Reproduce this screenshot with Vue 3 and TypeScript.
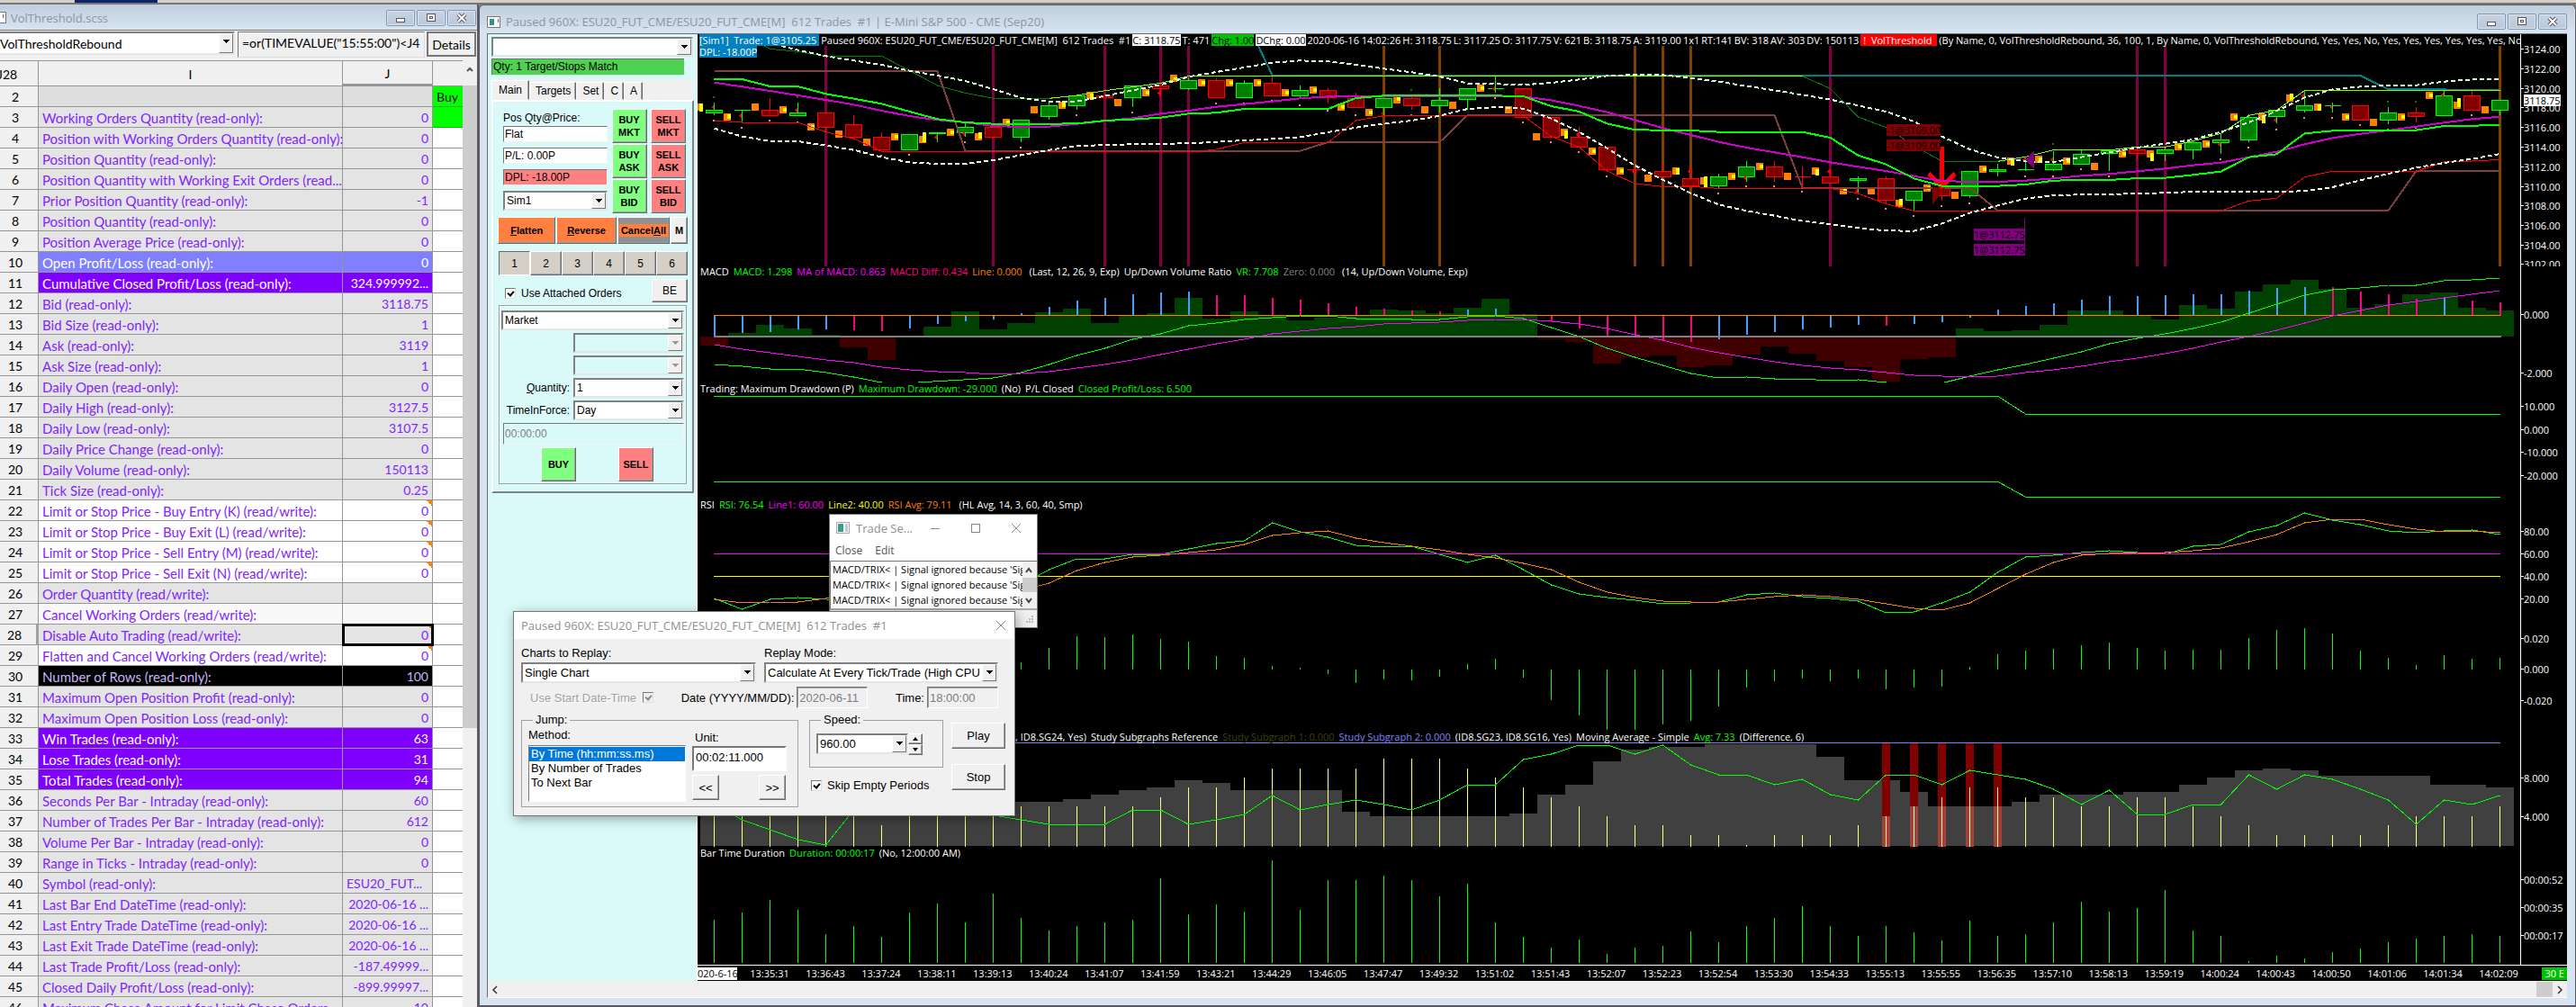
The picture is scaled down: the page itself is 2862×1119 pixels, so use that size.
<script setup lang="ts">
type Cell = { n: number; label: string; value: string; tone?: string; note?: boolean; left?: boolean }

const rows: Cell[] = [
  { n: 2, label: '', value: '', tone: 'head' },
  { n: 3, label: 'Working Orders Quantity (read-only):', value: '0' },
  { n: 4, label: 'Position with Working Orders Quantity (read-only):', value: '0' },
  { n: 5, label: 'Position Quantity (read-only):', value: '0' },
  { n: 6, label: 'Position Quantity with Working Exit Orders (read...', value: '0' },
  { n: 7, label: 'Prior Position Quantity (read-only):', value: '-1' },
  { n: 8, label: 'Position Quantity (read-only):', value: '0' },
  { n: 9, label: 'Position Average Price (read-only):', value: '0' },
  { n: 10, label: 'Open Profit/Loss (read-only):', value: '0', tone: 'blue' },
  { n: 11, label: 'Cumulative Closed Profit/Loss (read-only):', value: '324.999992...', tone: 'violet' },
  { n: 12, label: 'Bid (read-only):', value: '3118.75' },
  { n: 13, label: 'Bid Size (read-only):', value: '1' },
  { n: 14, label: 'Ask (read-only):', value: '3119' },
  { n: 15, label: 'Ask Size (read-only):', value: '1' },
  { n: 16, label: 'Daily Open (read-only):', value: '0' },
  { n: 17, label: 'Daily High (read-only):', value: '3127.5' },
  { n: 18, label: 'Daily Low (read-only):', value: '3107.5' },
  { n: 19, label: 'Daily Price Change (read-only):', value: '0' },
  { n: 20, label: 'Daily Volume (read-only):', value: '150113' },
  { n: 21, label: 'Tick Size (read-only):', value: '0.25' },
  { n: 22, label: 'Limit or Stop Price - Buy Entry (K) (read/write):', value: '0', tone: 'white', note: true },
  { n: 23, label: 'Limit or Stop Price - Buy Exit (L) (read/write):', value: '0', tone: 'white', note: true },
  { n: 24, label: 'Limit or Stop Price - Sell Entry (M) (read/write):', value: '0', tone: 'white', note: true },
  { n: 25, label: 'Limit or Stop Price - Sell Exit (N) (read/write):', value: '0', tone: 'white', note: true },
  { n: 26, label: 'Order Quantity (read/write):', value: '' },
  { n: 27, label: 'Cancel Working Orders (read/write):', value: '', tone: 'pale' },
  { n: 28, label: 'Disable Auto Trading (read/write):', value: '0', note: true },
  { n: 29, label: 'Flatten and Cancel Working Orders (read/write):', value: '0', tone: 'white', note: true },
  { n: 30, label: 'Number of Rows (read-only):', value: '100', tone: 'black' },
  { n: 31, label: 'Maximum Open Position Profit (read-only):', value: '0' },
  { n: 32, label: 'Maximum Open Position Loss (read-only):', value: '0' },
  { n: 33, label: 'Win Trades (read-only):', value: '63', tone: 'violet' },
  { n: 34, label: 'Lose Trades (read-only):', value: '31', tone: 'violet' },
  { n: 35, label: 'Total Trades (read-only):', value: '94', tone: 'violet' },
  { n: 36, label: 'Seconds Per Bar - Intraday (read-only):', value: '60' },
  { n: 37, label: 'Number of Trades Per Bar - Intraday (read-only):', value: '612' },
  { n: 38, label: 'Volume Per Bar - Intraday (read-only):', value: '0' },
  { n: 39, label: 'Range in Ticks - Intraday (read-only):', value: '0' },
  { n: 40, label: 'Symbol (read-only):', value: 'ESU20_FUT...', left: true },
  { n: 41, label: 'Last Bar End DateTime (read-only):', value: '2020-06-16 ...' },
  { n: 42, label: 'Last Entry Trade DateTime (read-only):', value: '2020-06-16 ...' },
  { n: 43, label: 'Last Exit Trade DateTime (read-only):', value: '2020-06-16 ...' },
  { n: 44, label: 'Last Trade Profit/Loss (read-only):', value: '-187.49999...' },
  { n: 45, label: 'Closed Daily Profit/Loss (read-only):', value: '-899.99997...' },
  { n: 46, label: 'Maximum Chase Amount for Limit Chase Orders...', value: '10' },
]

const STEP = 31
const X0 = 793.5
const X = (k: number) => X0 + STEP * k

/* "bar,y bar,y ..." to an SVG point list; unit divides the y values */
const line = (s: string, unit = 1) =>
  s.split(' ').map((p) => {
    const [k, y] = p.split(',').map(Number)
    return `${X(k)},${y / unit}`
  }).join(' ')
const list = (s: string) => s.trim().split(/\s+/).map(Number)

/* candles: body top, body bottom, high, low, pink dot (0 = none), colour; thirds of a pixel */
const candleText = `367 377 343 384 402 g|366 368 367 407 426 g|367 386 328 386 402 r|376 386 343 386 408 g|376 425 376 440 0 r|415 458 385 465 0 r|457 500 442 500 520 r|448 500 448 500 516 g|442 448 442 473 0 g|424 443 410 455 474 g|424 458 418 462 0 r|400 458 400 473 492 g|352 391 343 398 0 g|319 353 319 365 384 g|319 328 308 328 0 r|286 328 286 357 375 g|286 296 275 325 0 r|268 296 258 300 0 g|268 328 262 328 345 r|277 328 268 328 345 g|277 320 255 320 335 r|301 320 285 325 351 g|301 328 295 345 370 r|328 359 310 359 384 r|328 359 328 385 0 g|328 353 320 365 384 r|334 353 295 375 0 g|295 334 295 365 0 g|295 297 255 308 326 g|295 392 295 392 408 r|391 458 391 458 474 r|457 491 424 491 507 r|490 566 490 566 588 r|565 567 550 590 0 r|571 590 546 600 0 r|595 622 557 622 0 r|589 622 580 628 645 g|556 590 538 605 621 g|556 590 538 605 621 r|589 591 556 620 639 r|589 613 565 613 0 r|595 604 588 645 663 g|595 670 588 678 696 r|637 670 637 702 720 g|628 653 620 670 687 r|571 653 571 660 678 g|565 572 545 588 0 g|565 567 527 570 588 g|547 566 505 570 588 g|514 548 502 548 564 g|500 514 500 570 588 g|498 514 490 535 0 r|499 514 490 537 0 g|475 500 468 532 0 g|466 476 445 512 531 g|391 467 380 474 492 g|367 391 367 412 432 g|352 368 303 375 393 g|351 353 343 375 393 g|352 401 352 401 417 r|376 401 357 414 432 g|376 391 357 408 426 r|319 386 302 388 408 g|319 368 303 368 384 r|334 368 334 384 0 g`
const candles = candleText.split('|').map((c, k) => {
  const p = c.split(' ')
  const [t, b, h, l, d] = p.slice(0, 5).map((v) => Math.round(Number(v) / 3))
  return { k, t, b, h, l, d, up: p[5] === 'g' }
})

/* markers between bars: top of the orange square, then the yellow part (0 = none) */
const marks = `346:346-372 378:380-396 345 354:360-373 411:417-430 435 462 444:450-462 453:441-475 429:434-446 444:441-462 396:402-412 354 339:337-357 306:311-332 330 297:304-315 249:257-267 264:269-281 264:269-281 264:269-281 297:303-315 288:294-306 345:351-363 363:369-381 321:325-338 354 339 282:288-300 354 444 429:435-462 492:498-510 558:564-576 582 558:562-584 591:588-627 576:582-594 543:549-561 576 558:564-586 624:630-642 624 666:663-683 615:621-633 639 552:558-570 525:530-552 519:525-537 525:531-543 543 501:507-519 501:510-537 477:483-495 468:474-486 378:385-397 378:385-413 315:312-333 345:348-370 378:385-397 396 378:384-396 306:312-324 339:327-358 354`
  .split(' ').map((m, i) => {
    const [top, y] = m.split(':')
    const [a, b] = y ? y.split('-').map(Number) : [0, 0]
    return { x: Math.round(X(i - 1) + 10), y: Math.round(Number(top) / 3), a: Math.round(a / 3), h: Math.round((b - a) / 3) }
  })
const arrows: [number, number][] = [[0, 357], [1, 386], [3, 367], [8, 457], [9, 446], [16, 310], [24, 378], [28, 296], [31, 448], [33, 572], [35, 572], [37, 592], [40, 572], [41, 638], [47, 532], [48, 532], [54, 481], [56, 400], [57, 320], [58, 357], [62, 316]]
const greenDots: [number, number][] = [[0, 324], [3, 324], [25, 300], [48, 480], [60, 339], [61, 339]]
const sessions: [number, string][] = [[4, 'm'], [10, 'm'], [14, 'm'], [16, 'm'], [17, 'm'], [24, 'o'], [26, 'o'], [33, 'o'], [34, 'o'], [35, 'o'], [40, 'm'], [51, 'm'], [52, 'm'], [64, 'o']]

const price = {
  dark1: line('1.8,153 2,163 3,172 4,187 6,187 7,235 8,285 9,310 10,328 12,328', 3),
  lime1: line('12,328 13,318 14,302 15,290 16,277 17,254 39,254', 3),
  dark2: line('39,254 40,295 41,390 42,425 43,485 44,538 46,538', 3),
  lime2: line('46,538 47,523 48,500 50,500 51,490 52,490 53,470 54,445 55,385 56,367 57,302 64,302', 3),
  brown: line('0,237 8,237 9,503 21,503 22,474 26,474 27,384 38,384 39,626 45,626 46,702 60,702 61,570 64,570', 3),
  teal: line('19.5,153 20,251 59,252 60,298 64,299', 3),
  red: line('0,402 1,408 3,408 4,440 5,462 6,505 17.3,505 18,498 19,475 22,475 23,402 24,386 29,386 30,455 31,490 32,570 33,612 34,622 35,622 36,628 40,628 41,645 42,680 43,703 54,703 55,670 56,661 57,590 58,571 61,571 62,540 63,537 64,532', 3),
  pink: line('0,275 1,289 2,303 3,318 4,333 5,349 6,369 7,387 8,400 9,408 10,420 11,423 12,422 13,413 14,403 15,394 16,379 17,369 18,356 19,347 20,338 21,328 22,322 28,320 29,322 30,334 31,353 32,374 33,400 34,427 35,450 36,473 37,492 38,508 39,524 40,541 41,556 42,570 43,587 44,603 45,606 46,606 47,602 48,595 49,586 50,580 51,571 52,562 53,551 54,542 55,524 56,506 57,481 58,460 59,446 60,435 61,422 62,409 63,397 64,389', 3),
  green: line('0,263 1,264 2,288 3,288 4,313 5,329 6,346 7,372 8,397 9,408 10,413 12,413 13,412 14,402 15,398 16,392 17,379 18,376 19,363 22,363 23,327 24,319 28,319 29,321 30,354 31,372 32,412 33,433 35,435 36,440 39,440 40,459 41,518 42,548 43,595 44,620 46,620 47,615 48,602 49,600 50,600 51,594 52,593 53,583 54,572 55,524 56,514 57,445 58,436 61,434 62,420 63,419 64,417', 3),
  upper: line('2.4,153 3,167 4,187 5,202 6,216 7,236 8,252 9,270 10,297 11,326 12,339 13,338 14,320 15,301 16,283 17,256 18,240 19,225 20,209 21,202 22,205 23,216 24,229 25,241 26,255 27,278 28,280 29,283 30,276 31,265 32,253 33,249 34,250 35,260 36,272 37,287 38,301 39,316 40,332 41,352 42,372 43,405 44,455 45,498 46,525 47,538 48,540 49,524 50,508 51,492 52,479 53,465 54,440 55,408 56,370 57,325 58,298 59,289 60,285 61,284 62,272 63,265 64,264', 3),
  lower: line('0,428 1,455 2,470 3,471 4,485 5,500 6,524 7,541 8,546 9,546 10,534 11,517 12,500 13,487 14,483 15,481 16,479 17,478 18,473 19,468 20,463 21,457 22,441 23,425 24,413 25,402 26,386 27,363 28,357 29,362 30,395 31,440 32,494 33,552 34,599 35,644 36,682 37,703 38,719 39,737 40,748 41,760 42,769 43,770 44,745 45,710 46,685 47,662 48,651 49,649 50,648 51,645 52,643 53,639 56,639 57,637 58,624 59,601 60,579 61,559 62,543 63,530 64,513', 3),
}

const volumeRatio = list(`384 370 361 365 372 386 400 374 363 346 366 359 347 343 359 350 348 331 354 346 351 356 353 350 344 345 348 342 332 349
  377 380 404 397 395 408 406 394 385 393 401 408 424 399 397 365 368 367 361 345 345 350 355 339 343 324 316 311 321 342 338 327 325 342 345`)
const macdDiff = list(`373 370 369 366 366 367 368 365 360 357 355 348 341 334 331 327 325 324 328 328 331 333 337 341 343 345 346 344 343 349
  357 365 373 373 378 380 377 372 369 366 364 361 362 360 358 353 344 340 337 333 329 329 328 327 327 323 320 319 319 324 327 332 331 334 336`)
const pinkBars = new Set([5, 6, 18, 19, 20, 21, 22, 23, 24, 25, 26, 29, 30, 31, 32, 33, 34, 35, 42, 58, 59, 60, 61, 63, 64])
const macd = {
  a: line('0,405 1,407 2,410 3,410 4,414 5,419 6,425'),
  b: line('7.3,425 10,420 11,414 12,405 13,395 14,387 15,377 16,371 17,362 18,359 19,355 20,353 21,351 22,351 23,354 24,354 25,355 26,355 27,352 28,351 29,354 30,364 31,374 32,387 33,397 34,406 35,415 36,420 37,419 38,421 39,421 40,423 41,422 42,425'),
  c: line('44.1,425 45,418 46,411 47,405 48,398 49,391 50,382 51,376 52,371 53,365 54,358 55,348 56,338 57,328 58,322 59,320 60,317 61,317 62,312 63,311 64,309'),
  ma: line('0,383 1,388 2,392 3,396 4,400 5,403 6,408 7,411 8,413 9,414 10,416 11,415 12,413 13,409 14,405 15,400 16,394 17,388 18,382 19,377 20,371 21,368 22,365 23,363 24,360 25,359 26,358 27,356 28,355 29,355 30,357 31,360 32,365 33,372 34,378 35,386 36,392 37,397 38,402 39,406 40,409 41,411 42,414 43,417 44,418 45,419 46,418 47,414 48,411 49,407 50,402 51,398 52,393 53,387 54,380 55,374 56,367 57,359 58,351 59,345 60,339 61,335 62,331 63,327 64,323'),
}
const rsi = line('0,665 1,677 2,666 3,664 4,666 8,668 11,650 12,633 13,621 14,621 15,616 16,616 17,610 18,604 19,601 20,581 21,591 22,597 23,606 24,608 25,607 26,616 27,625 28,617 29,633 30,650 31,660 32,664 33,667 34,671 35,670 36,669 37,661 38,659 39,663 40,665 41,668 42,681 43,680 44,670 45,658 46,636 47,619 48,617 49,614 50,612 51,614 52,616 53,607 54,605 55,591 56,584 57,570 58,578 59,583 60,590 61,592 62,590 63,589 64,594')
const rsiAvg = line('0,666 1,670 2,669 3,669 4,665 11,656 12,648 13,634 14,625 15,619 16,617 17,614 18,611 19,605 20,595 21,592 22,590 23,598 24,603 25,607 26,611 27,616 28,620 29,626 30,633 31,647 32,658 33,664 34,668 35,669 36,669 37,666 38,663 39,661 40,663 41,666 42,671 43,676 44,678 45,670 46,654 47,638 48,625 49,617 50,615 51,614 52,614 53,612 54,609 55,602 56,594 57,581 58,577 59,577 60,583 61,588 62,591 63,590 64,592')
const trix = list(`743 743 743 743 743 743 743 743 743 743 743 736 720 707 708 705 710 713 729 731 740 742 749 759 755 756 752 738 732 753
  778 795 811 811 805 801 785 764 757 754 757 754 766 764 763 741 727 723 721 717 714 720 723 722 722 709 700 698 704 723 731 739 728 732 731`)
const area = list(`891 891 891 891 891 891 891 891 891 891 891 891 891 888 883 878 875 867 870 878 878 878 878 902 907 907 907 907 907 904
  883 872 846 833 830 830 827 827 827 827 841 867 867 880 896 896 896 891 883 883 883 880 880 872 864 856 854 856 862 862 862 862 872 872 875`)
const ticksUp = list(`896 896 896 896 896 896 917 896 896 896 896 896 896 896 896 896 886 875 875 864 854 854 854 854 843 843 843 854 864 875
  886 896 907 917 917 928 928 939 928 928 928 917 907 896 886 875 875 886 886 896 896 886 886 896 907 917 928 928 928 928 917 907 907 907 896`)
const average = line('0,895 1,911 2,922 3,933 4,939 5,900 10,906 11,911 12,916 14,916 15,900 16,900 17,916 18,911 19,905 20,884 21,900 22,894 23,889 24,894 25,900 26,889 27,872 28,872 29,844 30,838 31,828 32,828 33,838 34,828 35,850 36,861 37,861 38,872 39,866 40,883 41,889 42,861 43,861 44,872 45,856 46,861 47,866 48,877 49,894 50,878 51,905 52,905 53,894 54,894 55,861 56,877 57,861 58,866 59,877 60,889 61,916 62,889 63,894 64,884')
const signals: [number, number][] = [[42, 907], [43, 896], [44, 896], [45, 896], [46, 896]]
const duration = list(`1022 1014 1000 1011 1038 1029 1041 1014 1004 1025 993 1020 1034 1029 1025 1022 976 1016 1005 1013 956 1011 978 978 973 978 996 982 1025 1041
  1053 1044 1060 1053 1051 1035 1047 1029 1020 1007 1029 1040 1029 1036 1045 1023 1040 1038 1025 1002 1013 1009 989 1034 1040 1068 1062 1065 1058 1054 1047 1043 1040 1038 1040`)

/* panes: top and height in chart units, with the labels of the value axis */
type Label = { y: number; t: string }
type Pane = { id: string; y: number; h: number; labels: Label[] }
const mk = (s: string): Label[] => s.split(' ').filter(Boolean).map((p) => ({ t: p.split('@')[0], y: Number(p.split('@')[1]) }))
const panes: Pane[] = [
  { id: 'price', y: 38, h: 258, labels: mk('3124.00@55 3122.00@77 3120.00@99 3118.00@120 3116.00@142 3114.00@164 3112.00@186 3110.00@208 3108.00@229 3106.00@251 3104.00@273 3102.00@294') },
  { id: 'macd', y: 296, h: 130, labels: mk('0.000@350 -2.000@415') },
  { id: 'draw', y: 426, h: 129, labels: mk('10.000@452 0.000@478 -10.000@503 -20.000@529') },
  { id: 'rsi', y: 555, h: 131, labels: mk('80.00@591 60.00@616 40.00@641 20.00@666') },
  { id: 'trix', y: 686, h: 127, labels: mk('0.020@710 0.000@744 -0.020@779') },
  { id: 'reference', y: 813, h: 129, labels: mk('8.000@865 4.000@908') },
  { id: 'time', y: 942, h: 130, labels: mk('00:00:52@978 00:00:35@1009 00:00:17@1040') },
]
const pct = (p: Pane, y: number) => `${((y - p.y) / p.h) * 100}%`

const headline: { t: string; c?: string }[] = [
  { t: '[Sim1]  Trade: 1@3105.25 ', c: 'sim' },
  { t: 'Paused 960X: ESU20_FUT_CME/ESU20_FUT_CME[M]  612 Trades  #1' },
  { t: 'C: 3118.75', c: 'inv' }, { t: 'T: 471' }, { t: 'Chg: 1.00', c: 'chg' }, { t: 'DChg: 0.00', c: 'inv' },
  { t: '2020-06-16 14:02:26' }, { t: 'H: 3118.75' }, { t: 'L: 3117.25' }, { t: 'O: 3117.75' }, { t: 'V: 621' },
  { t: 'B: 3118.75' }, { t: 'A: 3119.00' }, { t: '1x1' }, { t: 'RT:141' }, { t: 'BV: 318' }, { t: 'AV: 303' }, { t: 'DV: 150113' },
  { t: '!  VolThreshold ', c: 'alert' },
  { t: '(By Name, 0, VolThresholdRebound, 36, 100, 1, By Name, 0, VolThresholdRebound, Yes, Yes, No, Yes, Yes, Yes, Yes, Yes, Yes, No, No' },
]
const titles: Record<string, { t: string; c?: string }[]> = {
  macd: [{ t: 'MACD' }, { t: 'MACD: 1.298', c: 'lime' }, { t: 'MA of MACD: 0.863', c: 'mag' }, { t: 'MACD Diff: 0.434', c: 'rose' }, { t: 'Line: 0.000', c: 'tang' }, { t: ' (Last, 12, 26, 9, Exp)' }, { t: 'Up/Down Volume Ratio' }, { t: 'VR: 7.708', c: 'lime' }, { t: 'Zero: 0.000', c: 'gray' }, { t: ' (14, Up/Down Volume, Exp)' }],
  draw: [{ t: 'Trading: Maximum Drawdown (P)' }, { t: 'Maximum Drawdown: -29.000', c: 'lime' }, { t: '(No)' }, { t: 'P/L Closed' }, { t: 'Closed Profit/Loss: 6.500', c: 'lime' }],
  rsi: [{ t: 'RSI' }, { t: 'RSI: 76.54', c: 'lime' }, { t: 'Line1: 60.00', c: 'mag' }, { t: 'Line2: 40.00', c: 'yel' }, { t: 'RSI Avg: 79.11', c: 'tang' }, { t: ' (HL Avg, 14, 3, 60, 40, Smp)' }],
  trix: [],
  reference: [{ t: ', ID8.SG24, Yes)' }, { t: 'Study Subgraphs Reference' }, { t: 'Study Subgraph 1: 0.000', c: 'olive' }, { t: 'Study Subgraph 2: 0.000', c: 'peri' }, { t: '(ID8.SG23, ID8.SG16, Yes)' }, { t: 'Moving Average - Simple' }, { t: 'Avg: 7.33', c: 'lime' }, { t: '(Difference, 6)' }],
  time: [{ t: 'Bar Time Duration' }, { t: 'Duration: 00:00:17', c: 'lime' }, { t: '(No, 12:00:00 AM)' }],
}
const times = '13:35:31 13:36:43 13:37:24 13:38:11 13:39:13 13:40:24 13:41:07 13:41:59 13:43:21 13:44:29 13:46:05 13:47:47 13:49:32 13:51:02 13:51:43 13:52:07 13:52:23 13:52:54 13:53:30 13:54:33 13:55:13 13:55:55 13:56:35 13:57:10 13:58:13 13:59:19 14:00:24 14:00:43 14:00:50 14:01:06 14:01:34 14:02:09'.split(' ')
const orders = [['BUY', 'MKT'], ['BUY', 'ASK'], ['BUY', 'BID']]
const log = ['a', 'b', 'c']
</script>

<template>
  <div class="desk">
    <div class="strip"><span></span></div>
    <main class="work">
      <section class="win sheet">
        <header class="bar">
          <svg class="ico" viewBox="0 0 15 13"><rect x=".5" y=".5" width="14" height="12" fill="#fff" stroke="#777" /><rect x="3" y="3" width="5" height="7" fill="#3c8c8c" /><rect x="11" y="3" width="1" height="4" fill="#666" /></svg>
          <h1>VolThreshold.scss</h1>
          <div class="caps">
            <button aria-label="Minimize"><svg viewBox="0 0 30 16"><rect x="10.5" y="8.5" width="9" height="4" fill="#fff" stroke="#556" /></svg></button>
            <button aria-label="Restore"><svg viewBox="0 0 30 16"><rect x="10.5" y="3.5" width="9" height="8" fill="#fff" stroke="#556" /><rect x="13.5" y="6.500" width="3" height="2" fill="#fff" stroke="#556" /></svg></button>
            <button aria-label="Close"><svg viewBox="0 0 30 16"><path d="M11 4l8 8M19 4l-8 8" stroke="#556" stroke-width="4" /><path d="M11 4l8 8M19 4l-8 8" stroke="#fff" stroke-width="2" /></svg></button>
          </div>
        </header>
        <div class="formula">
          <span class="combo wide"><select aria-label="Sheet"><option>VolThresholdRebound</option></select><i></i></span>
          <input aria-label="Formula" value='=or(TIMEVALUE("15:55:00")<J4' />
          <button>Details</button>
        </div>
        <div class="grid">
          <table>
            <colgroup><col class="c0" /><col class="c1" /><col class="c2" /><col class="c3" /></colgroup>
            <thead><tr><th class="ref">J28</th><th>I</th><th class="cur">J</th><th></th></tr></thead>
            <tbody>
              <tr v-for="r in rows" :key="r.n" :class="r.tone">
                <th :class="{ on: r.n === 28 }">{{ r.n }}</th>
                <td class="lab">{{ r.label }}</td>
                <td class="num" :class="{ note: r.note, left: r.left, sel: r.n === 28 }">{{ r.value }}</td>
                <td class="k" :class="{ signal: r.n < 4 }">{{ r.n === 2 ? 'Buy' : '' }}</td>
              </tr>
            </tbody>
          </table>
          <div class="vscroll"><svg viewBox="0 0 16 28"><path d="M5 12l3-3 3 3" fill="none" stroke="#555" stroke-width="2" /></svg><span></span></div>
        </div>
      </section>

      <section class="win chartwin">
        <header class="bar">
          <svg class="ico" viewBox="0 0 15 13"><rect x=".5" y=".5" width="14" height="12" fill="#fff" stroke="#777" /><rect x="3" y="3" width="5" height="7" fill="#3c8c8c" /><rect x="12" y="3" width="1" height="4" fill="#666" /></svg>
          <h1>Paused 960X: ESU20_FUT_CME/ESU20_FUT_CME[M]&nbsp; 612 Trades&nbsp; #1 | E-Mini S&amp;P 500 - CME (Sep20)</h1>
          <div class="caps">
            <button aria-label="Minimize"><svg viewBox="0 0 30 16"><rect x="10.5" y="8.5" width="9" height="4" fill="#fff" stroke="#556" /></svg></button>
            <button aria-label="Restore"><svg viewBox="0 0 30 16"><rect x="10.5" y="3.5" width="9" height="8" fill="#fff" stroke="#556" /><rect x="13.5" y="6.500" width="3" height="2" fill="#fff" stroke="#556" /></svg></button>
            <button aria-label="Close"><svg viewBox="0 0 30 16"><path d="M11 4l8 8M19 4l-8 8" stroke="#556" stroke-width="4" /><path d="M11 4l8 8M19 4l-8 8" stroke="#fff" stroke-width="2" /></svg></button>
          </div>
        </header>
        <div class="body">
          <aside class="trade">
            <span class="combo top"><select aria-label="Configuration"><option></option></select><i></i></span>
            <p class="match">Qty: 1 Target/Stops Match</p>
            <nav class="tabs"><button class="act">Main</button><button>Targets</button><button>Set</button><button>C</button><button>A</button></nav>
            <div class="page">
              <div class="entry">
                <div class="fields">
                  <label for="pos">Pos Qty@Price:</label>
                  <input id="pos" value="Flat" />
                  <input aria-label="P/L" value="P/L: 0.00P" />
                  <input aria-label="Daily P/L" class="loss" value="DPL: -18.00P" />
                  <span class="combo"><select aria-label="Account"><option>Sim1</option></select><i></i></span>
                </div>
                <div class="pair"><button v-for="o in orders" :key="o[1]" class="b3 buy">{{ o[0] }}<br />{{ o[1] }}</button></div>
                <div class="pair"><button v-for="o in orders" :key="o[1]" class="b3 sell">SELL<br />{{ o[1] }}</button></div>
              </div>
              <div class="acts">
                <button class="b3 flat f"><u>F</u>latten</button><button class="b3 flat r"><u>R</u>everse</button><button class="b3 can"><span>Cancel<u>A</u>ll</span></button><button class="b3 m">M</button>
              </div>
              <div class="nums"><button v-for="n in 6" :key="n" class="b3" :class="{ down: n === 1 }">{{ n }}</button></div>
              <div class="att">
                <label><input type="checkbox" checked />Use Attached Orders</label>
                <button class="b3">BE</button>
              </div>
              <div class="group">
                <span class="combo"><select aria-label="Order type"><option>Market</option></select><i></i></span>
                <div class="row"><span class="combo off"><select disabled aria-label="Price 1"><option></option></select><i></i></span></div>
                <div class="row"><span class="combo off"><select disabled aria-label="Price 2"><option></option></select><i></i></span></div>
                <div class="row"><label for="qty"><u>Q</u>uantity:</label><span class="combo"><select id="qty"><option>1</option></select><i></i></span></div>
                <div class="row"><label for="tif">TimeInForce:</label><span class="combo"><select id="tif"><option>Day</option></select><i></i></span></div>
                <input class="gtd" disabled aria-label="Good till" value="00:00:00" />
                <div class="send"><button class="b3 buy">BUY</button><button class="b3 sell">SELL</button></div>
              </div>
            </div>
          </aside>

          <div class="chart">
            <div v-for="p in panes" :key="p.id" class="pane" :style="{ flexGrow: p.h }">
              <div class="plot">
                <svg class="canvas" :viewBox="`775 ${p.y} 2025 ${p.h}`" preserveAspectRatio="none" shape-rendering="crispEdges" fill="none">
                  <template v-if="p.id === 'price'">
                    <line v-for="s in sessions" :key="s[0]" :x1="X(s[0])" :x2="X(s[0])" y1="51" y2="296" stroke-width="3" :stroke="s[1] === 'm' ? '#800040' : '#804000'" />
                    <g v-for="m in marks" :key="m.x"><rect :x="m.x" :y="m.y" width="8" height="8" fill="#ff8000" /><rect v-if="m.a" :x="m.x + 4" :y="m.a" width="4" :height="m.h" fill="#ff0" /></g>
                    <g v-for="c in candles" :key="c.k" :stroke="c.up ? '#0f0' : '#f00'">
                      <line :x1="X(c.k)" :x2="X(c.k)" :y1="c.h" :y2="c.l" />
                      <line v-if="c.b - c.t < 2" :x1="X(c.k) - 9" :x2="X(c.k) + 9" :y1="c.t + 0.5" :y2="c.t + 0.5" />
                      <rect v-else :x="X(c.k) - 9" :y="c.t + 0.5" width="18" :height="c.b - c.t - 1" :fill="c.up ? '#008000' : '#800000'" />
                      <rect v-if="c.d" :x="X(c.k) - 1.5" :y="c.d - 1" width="2" height="2" fill="#ff8080" stroke="none" />
                    </g>
                    <path v-for="(a, i) in arrows" :key="i" :d="`M${X(a[0]) - 3.5} ${a[1] / 3}l3 -3v6z`" fill="#f00" />
                    <rect v-for="(d, i) in greenDots" :key="i" :x="X(d[0]) - 1.5" :y="d[1] / 3 - 1" width="2" height="2" fill="#008000" />
                    <polyline :points="price.dark1" stroke="#008000" /><polyline :points="price.dark2" stroke="#008000" />
                    <polyline :points="price.teal" stroke="#008080" stroke-width="2" />
                    <polyline :points="price.brown" stroke="#804040" stroke-width="2" />
                    <polyline :points="price.lime1" stroke="#80ff00" /><polyline :points="price.lime2" stroke="#80ff00" />
                    <polyline :points="price.red" stroke="#f00" />
                    <path d="M2147 208h14l-14 20z" fill="#800000" />
                    <path d="M2157.500 163V206M2143 193l14.500 14l14.500 -14" stroke="#f00" stroke-width="5" />
                    <polyline :points="price.pink" stroke="#d000d0" stroke-width="2" />
                    <polyline :points="price.green" stroke="#0f0" stroke-width="2" />
                    <polyline :points="price.upper" stroke="#d8ffd8" stroke-width="2" stroke-dasharray="5 3" />
                    <polyline :points="price.lower" stroke="#ffffe0" stroke-width="2" stroke-dasharray="5 3" />
                    <path d="M2260 167v21l-10 -10z" fill="#800080" />
                    <path d="M2249.500 242v30" stroke="#800080" />
                  </template>
                  <template v-else-if="p.id === 'macd'">
                    <rect v-for="(v, k) in volumeRatio" :key="k" :x="X(k) - 15.5" width="31" :y="Math.min(v, 374)" :height="Math.abs(v - 374)" :fill="v < 374 ? '#004000' : '#400000'" />
                    <line v-for="(v, k) in macdDiff" :key="k" :x1="X(k)" :x2="X(k)" :y1="351" :y2="v" stroke-width="2" :stroke="pinkBars.has(k) ? '#ff0080' : '#40a0ff'" />
                    <path d="M793 350.500H2778" stroke="#ff8000" />
                    <polyline :points="macd.a" stroke="#0f0" /><polyline :points="macd.b" stroke="#0f0" /><polyline :points="macd.c" stroke="#0f0" />
                    <polyline :points="macd.ma" stroke="#f0f" />
                    <path d="M793 374H2779" stroke="#808080" stroke-width="2" />
                  </template>
                  <g v-else-if="p.id === 'draw'" stroke="#0f0">
                    <path d="M793 440.500H2220L2251 460.500H2778M793 535.500H2220L2251 552.500H2778" />
                  </g>
                  <template v-else-if="p.id === 'rsi'">
                    <polyline :points="rsi" stroke="#0f0" />
                    <path d="M793 615.500H2778" stroke="#f0f" /><path d="M793 640.500H2778" stroke="#ff0" />
                    <polyline :points="rsiAvg" stroke="#ff8000" />
                  </template>
                  <g v-else-if="p.id === 'trix'" stroke="#0f0">
                    <line v-for="(v, k) in trix" :key="k" :x1="X(k)" :x2="X(k)" y1="743.5" :y2="v" />
                  </g>
                  <template v-else-if="p.id === 'reference'">
                    <rect v-for="(v, k) in area" :key="k" :x="X(k) - 15.5" width="31" :y="v" :height="940 - v" fill="#404040" />
                    <g v-for="s in signals" :key="s[0]"><rect :x="X(s[0]) - 4.5" y="826" width="9" height="115" fill="#800000" /><rect :x="X(s[0]) - 4.5" :y="s[1]" width="9" :height="941 - s[1]" fill="#a34040" /></g>
                    <line v-for="(v, k) in ticksUp" :key="k" :x1="X(k)" :x2="X(k)" y1="941" :y2="v" stroke="#ffff80" />
                    <path d="M793 825.500H2778" stroke="#8080ff" />
                    <polyline :points="average" stroke="#0f0" />
                  </template>
                  <g v-else stroke="#0f0">
                    <line v-for="(v, k) in duration" :key="k" :x1="X(k)" :x2="X(k)" y1="1070" :y2="v" />
                  </g>
                </svg>
                <template v-if="p.id === 'price'">
                  <p class="study main"><span v-for="(s, i) in headline" :key="i" :class="s.c">{{ s.t }}</span></p>
                  <p class="study"><span class="sim">DPL: -18.00P</span></p>
                  <div class="fills short" :style="{ left: `${(1321 / 2025) * 100}%`, top: pct(p, 138) }"><span>-1@3109.00</span><span>-1@3109.00</span></div>
                  <div class="fills long" :style="{ left: `${(1418 / 2025) * 100}%`, top: pct(p, 254) }"><span>1@3112.75</span><span>1@3112.75</span></div>
                </template>
                <p v-else class="study gap" :class="p.id"><span v-for="(s, i) in titles[p.id]" :key="i" :class="s.c">{{ s.t }}</span></p>
              </div>
              <div class="axis">
                <span v-for="l in p.labels" :key="l.t" :style="{ top: pct(p, l.y) }">{{ l.t }}</span>
                <b v-if="p.id === 'price'" :style="{ top: pct(p, 112) }">3118.75</b>
              </div>
            </div>
            <div class="times">
              <div class="scale"><b>020-6-16</b><span v-for="t in times" :key="t">{{ t }}</span></div>
              <div class="corner"><em>30 E</em></div>
            </div>
          </div>
        </div>
        <div class="hscroll">
          <svg viewBox="0 0 16 17"><path d="M10 5l-4 4 4 4" fill="none" stroke="#333" stroke-width="1.500" /></svg>
          <span></span>
          <svg viewBox="0 0 16 17"><path d="M6 5l4 4-4 4" fill="none" stroke="#333" stroke-width="1.500" /></svg>
        </div>
      </section>
    </main>

    <section class="pop service">
      <header><svg class="ico" viewBox="0 0 15 13"><rect x=".5" y=".5" width="14" height="12" fill="#fff" stroke="#aaa" /><rect x="2" y="2" width="6" height="9" fill="#3c9c8c" /><rect x="10" y="2" width="3" height="9" fill="#bcd" /></svg>
        <h2>Trade Se...</h2>
        <button aria-label="Minimize"><svg viewBox="0 0 12 12"><path d="M1 6.500h10" stroke="#888" /></svg></button>
        <button aria-label="Maximize"><svg viewBox="0 0 12 12"><rect x="1.500" y="1.500" width="9" height="9" fill="none" stroke="#888" /></svg></button>
        <button aria-label="Close"><svg viewBox="0 0 12 12"><path d="M1 1l10 10M11 1L1 11" stroke="#888" /></svg></button>
      </header>
      <nav><a href="#">Close</a><a href="#">Edit</a></nav>
      <div class="log">
        <ul><li v-for="l in log" :key="l">MACD/TRIX&lt; | Signal ignored because 'Sign</li></ul>
        <div class="sb"><svg viewBox="0 0 15 18"><path d="M4 12l3-4 3 4" fill="none" stroke="#444" stroke-width="2" /></svg><span></span><svg viewBox="0 0 15 18"><path d="M4 7l3 4 3-4" fill="none" stroke="#444" stroke-width="2" /></svg></div>
      </div>
      <svg class="grip" viewBox="0 0 10 10" fill="#b8b8b8"><path d="M7 0h2v2h-2zM7 3h2v2h-2zM4 3h2v2h-2zM7 6h2v2h-2zM4 6h2v2h-2zM1 6h2v2h-2z" /></svg>
    </section>

    <section class="pop replay">
      <header><h2>Paused 960X: ESU20_FUT_CME/ESU20_FUT_CME[M]&nbsp; 612 Trades&nbsp; #1</h2><button aria-label="Close"><svg viewBox="0 0 12 12"><path d="M1 1l10 10M11 1L1 11" stroke="#888" /></svg></button></header>
      <div class="form">
        <div class="two">
          <label for="charts">Charts to Replay:</label><label for="mode">Replay Mode:</label>
          <span class="combo"><select id="charts"><option>Single Chart</option></select><i></i></span>
          <span class="combo"><select id="mode"><option>Calculate At Every Tick/Trade (High CPU Usage)</option></select><i></i></span>
        </div>
        <div class="when">
          <label class="dis">Use Start Date-Time<input type="checkbox" checked disabled /></label>
          <label>Date (YYYY/MM/DD):<input disabled value="2020-06-11" /></label>
          <label>Time:<input disabled value="18:00:00" /></label>
        </div>
        <div class="deck">
          <fieldset class="jump">
            <legend>Jump:</legend>
            <div class="method">
              <label for="method">Method:</label>
              <select id="method" size="3"><option selected>By Time (hh:mm:ss.ms)</option><option>By Number of Trades</option><option>To Next Bar</option></select>
            </div>
            <div class="unit">
              <label for="unit">Unit:</label>
              <input id="unit" value="00:02:11.000" />
              <div><button class="b3">&lt;&lt;</button><button class="b3">&gt;&gt;</button></div>
            </div>
          </fieldset>
          <div class="mid">
            <fieldset class="speed">
              <legend>Speed:</legend>
              <span class="combo"><select aria-label="Speed"><option>960.00</option></select><i></i></span>
              <span class="spin"><button class="b3" aria-label="Faster"><svg viewBox="0 0 6 4"><path d="M0 4h6L3 0z" /></svg></button><button class="b3" aria-label="Slower"><svg viewBox="0 0 6 4"><path d="M0 0h6L3 4z" /></svg></button></span>
            </fieldset>
            <label class="skip"><input type="checkbox" checked />Skip Empty Periods</label>
          </div>
          <div class="go"><button class="b3">Play</button><button class="b3">Stop</button></div>
        </div>
      </div>
    </section>
  </div>
</template>

<style>
body { margin: 0; overflow: hidden; }
</style>

<style scoped>
* { box-sizing: border-box; }
h1, h2, p, ul { margin: 0; padding: 0; font-weight: normal; list-style: none; }
button, input, select { font: inherit; color: inherit; margin: 0; border-radius: 0; }
button { padding: 0; }
svg { display: block; }
.desk { position: relative; height: 100vh; display: flex; flex-direction: column; overflow: hidden; background: #808080; font-family: "Liberation Sans", Arial, sans-serif; font-size: 12px; color: #000; }
.strip { height: 5px; background: #d4d0c8; border-bottom: 2px solid #77757a; }
.strip span { display: block; width: 92px; height: 3px; margin-left: 83px; background: #0a246a; }
.work { flex: 1; min-height: 0; display: grid; grid-template-columns: 540px minmax(0, 1fr); margin-left: -8px; }
.win { display: flex; flex-direction: column; min-width: 0; min-height: 0; overflow: hidden; background: #d6e3f0; }
.bar { flex: none; display: flex; align-items: center; background: linear-gradient(#bfcedd, #d7e4f2); font-family: "Open Sans", "Noto Sans", sans-serif; color: #8f949b; }
.bar h1 { flex: 1; font-size: 13px; line-height: 20px; white-space: pre; }
.ico { width: 15px; height: 13px; }
.caps { display: flex; gap: 2px; }
.caps button { width: 32px; height: 18px; border: 1px solid #8497b0; border-radius: 2px; background: linear-gradient(#c6d3e2, #b9c8d9); box-shadow: inset 0 0 0 1px #d9e4f0; }
.caps svg { width: 30px; height: 16px; }

.combo { display: flex; height: 22px; background: #fff; border: 2px solid; border-color: #808080 #e6e6e6 #e6e6e6 #808080; }
.combo select { appearance: none; flex: 1; min-width: 0; border: 0; padding: 0 0 0 2px; background: transparent; outline: 0; white-space: nowrap; text-overflow: clip; opacity: 1; }
.combo i { flex: none; width: 16px; border: 1px solid; border-color: #fff #777 #777 #fff; background: linear-gradient(#000, #000) 4px 6px / 7px 1px no-repeat, linear-gradient(#000, #000) 5px 7px / 5px 1px no-repeat, linear-gradient(#000, #000) 6px 8px / 3px 1px no-repeat, linear-gradient(#000, #000) 7px 9px / 1px 1px no-repeat, #f0f0f0; }
.combo.off { background: transparent; }
.combo.off i { background: linear-gradient(#999, #999) 4px 6px / 7px 1px no-repeat, linear-gradient(#999, #999) 5px 7px / 5px 1px no-repeat, linear-gradient(#999, #999) 6px 8px / 3px 1px no-repeat, linear-gradient(#999, #999) 7px 9px / 1px 1px no-repeat, #f0f0f0; }
.b3 { border: 1px solid; border-color: #fff #696969 #696969 #fff; box-shadow: inset -1px -1px #a0a0a0; background: #f0f0f0; }
input[type="checkbox"] { appearance: none; flex: none; width: 12px; height: 12px; border: 1px solid #777; border-right-color: #e0e0e0; border-bottom-color: #e0e0e0; background: #fff; position: relative; }
input[type="checkbox"]::after { content: ""; position: absolute; left: 3px; top: 1px; width: 3px; height: 5px; border: solid #000; border-width: 0 2px 2px 0; transform: rotate(40deg); }

/* spreadsheet */
.sheet { background: #f0f0f0; border-right: 2px solid #5a5a60; font-family: Lato, "Open Sans", sans-serif; font-size: 14px; }
.sheet .bar { height: 29px; padding: 1px 1px 0 0; border-bottom: 1px solid #777; }
.sheet .bar h1 { padding-left: 5px; }
.formula { display: flex; gap: 2px; padding: 1px 1px 0 8px; height: 33px; }
.combo.wide { width: 261px; height: 26px; margin-right: 1px; border-left: 0; }
.combo.wide select { padding: 0; }
.formula input { flex: 1; min-width: 0; height: 29px; border: 1px solid; border-color: #777 #ddd #ddd #777; background: #f0f0f0; padding: 0 0 4px 4px; }
.formula > button { width: 55px; height: 28px; border: 2px solid; border-color: #777; background: #f0f0f0; }
.grid { flex: 1; min-height: 0; display: flex; overflow: hidden; }
table { width: 522px; flex: none; align-self: flex-start; table-layout: fixed; border-collapse: separate; border-spacing: 0; }
.c0 { width: 51px; } .c1 { width: 338px; } .c2 { width: 100px; } .c3 { width: 33px; }
th, td { height: 23px; padding: 2px 4px 0; border: solid #969696; border-width: 0 1px 1px 0; font-weight: normal; line-height: 18px; white-space: nowrap; overflow: hidden; }
th { background: #f0f0f0; color: #000; text-align: center; }
tr > :last-child { border-right: 0; }
thead th { height: 29px; border-top-width: 1px; }
thead th.ref { text-align: left; padding-left: 5px; }
thead th.cur { border-bottom-width: 3px; }
td { background: #e4e4e4; color: #7f26ff; }
td.lab { font-size: 15px; padding-right: 0; }
.num { text-align: right; }
.num.left { text-align: left; }
.head td { background: #dedede; }
.white td { background: #fff; }
.pale td { background: #f9f9f9; }
.blue td { background: #8080ff; color: #fff; }
.violet td { background: #8000ff; color: #fff; }
.black td { background: #000; color: #c8b4f8; }
td.note { background-image: linear-gradient(45deg, transparent 50%, #ff8000 50%); background-size: 6px 6px; background-position: top right; background-repeat: no-repeat; }
td.sel { outline: 3px solid #000; outline-offset: -2px; }
th.on { border-right: 3px solid #a0a0a0; }
tbody .k { background: #fff; color: #000; }
tbody .k.signal { background: #0f0; border-bottom-color: #00c000; }
.vscroll { width: 17px; background: #f0f0f0; }
.vscroll svg { width: 16px; height: 28px; }
.vscroll span { display: block; width: 16px; height: 714px; background: #cdcdcd; }

/* chart window */
.chartwin { padding: 0 9px 8px 8px; border: 1px solid #5a5a60; border-bottom-width: 2px; border-radius: 6px 6px 0 0; }
.chartwin .bar { height: 31px; margin: 0 -8px 0 -8px; padding: 5px 8px 0 8px; }
.chartwin .bar h1 { padding-left: 6px; }
.body { flex: 1; min-height: 0; display: flex; border: solid #6c6c70; border-width: 1px 0 0 1px; }
.trade { flex: none; width: 233px; padding: 3px 3px 0 4px; background: #daf9f9; border-right: 1px solid #fff; }
.combo.top { width: 224px; }
.match { width: 214px; height: 18px; margin-top: 2px; padding-left: 1px; background: #50d050; border: solid #707070; border-width: 1px 0 0 1px; line-height: 17px; }
.tabs { display: flex; align-items: flex-end; height: 23px; margin-top: 5px; background: #f0f0f0; border-radius: 2px; }
.tabs button { height: 20px; padding: 0 5px 0 6px; background: #f0f0f0; border: 1px solid; border-color: #fff #696969 transparent #fff; box-shadow: inset -1px 0 #a0a0a0; }
.tabs .act { height: 22px; padding: 0 7px; }
.page { padding: 8px 5px 8px 5px; border: 2px solid; border-color: #fff #808080 #808080 #fff; }
.page input { height: 18px; width: 100%; padding: 0 0 0 1px; border: 1px solid; border-color: #777 #f4f4f4 #f4f4f4 #777; background: #fff; }
.entry { display: flex; justify-content: space-between; padding-left: 6px; padding-right: 2px; }
.fields { flex: none; width: 116px; display: flex; flex-direction: column; gap: 6px; }
.fields label { height: 13px; line-height: 20px; }
.fields .loss { background: #ff8080; }
.pair { flex: none; display: flex; flex-direction: column; gap: 1px; }
.pair button, .send button { width: 39px; height: 38px; font-weight: bold; line-height: 14px; font-size: 11px; }
.b3.buy { background: #80ff80; }
.b3.sell { background: #ff8080; }
.acts { display: flex; gap: 1px; margin-top: 4px; height: 30px; font-weight: bold; font-size: 11px; }
.b3.flat { background: #ff8040; }
.acts .f { width: 65px; } .acts .r { width: 67px; } .acts .m { width: 19px; }
.acts .can { width: 59px; background: #909090; }
.can span { display: block; background: #ff8040; line-height: 14px; }
.nums { display: flex; margin: 8px 0 0 1px; }
.nums button { flex: 1; height: 27px; background: #d4d0c8; }
.nums .down { border-color: #696969 #fff #fff #696969; box-shadow: none; }
.att { display: flex; justify-content: space-between; align-items: center; margin: 3px 0 0 8px; height: 27px; }
.att label { display: flex; align-items: center; gap: 6px; padding-top: 6px; }
.page .att input { width: 12px; height: 12px; border-color: #777 #e0e0e0 #e0e0e0 #777; }
.att button { width: 40px; height: 26px; }
.group { display: flex; flex-direction: column; gap: 3px; margin: 3px 1px 0 1px; padding: 5px 2px 2px 2px; border: 1px solid #a0a0a0; box-shadow: inset 1px 1px #fff; }
.row { display: flex; justify-content: flex-end; align-items: center; gap: 4px; }
.row .combo { width: 123px; }
.group .gtd { height: 24px; margin-left: 2px; width: auto; background: transparent; color: #808080; }
.send { display: flex; gap: 47px; padding-left: 44px; }

.chart { flex: 1; min-width: 0; display: flex; flex-direction: column; background: #000; color: #fff; font-family: "Open Sans", "Noto Sans", sans-serif; font-size: 11px; }
.pane { flex: 1 1 0; min-height: 0; display: flex; }
.plot { position: relative; flex: 1; min-width: 0; overflow-x: clip; overflow-y: visible; }
.canvas { position: absolute; inset: 0; width: 100%; height: 100%; }
.axis { position: relative; width: 52px; border-left: 1px solid #fff; overflow: hidden; }
.axis span, .axis b { position: absolute; left: 0; line-height: 14px; margin-top: -7px; white-space: nowrap; font-weight: normal; }
.axis span::before { content: ""; display: inline-block; width: 3px; height: 1px; background: #fff; vertical-align: 4px; }
.axis b { left: 3px; line-height: 13px; background: #fff; color: #000; }
.study { position: relative; display: flex; height: 13px; padding-left: 2px; line-height: 13px; white-space: pre; }
.study.main { gap: 2px; }
.study.gap { gap: 5px; padding-left: 3px; height: 12px; line-height: 11px; }
.study.reference { padding-left: 353px; }
.study span { flex: none; }
.sim { background: #0080c0; }
.inv { background: #fff; color: #000; }
.chg { background: #00c000; color: #000; }
.alert { background: #f00; padding: 0 3px; }
.lime { color: #0f0; } .mag { color: #f0f; } .rose { color: #ff0080; } .tang { color: #ff8000; } .gray { color: #808080; }
.yel { color: #ff0; } .olive { color: #404000; } .peri { color: #8080ff; }
.fills { position: absolute; display: flex; flex-direction: column; gap: 4px; line-height: 13px; color: #000; }
.fills.short span { background: #800000; }
.fills.long span { background: #800080; }
.times { display: flex; height: 18px; border-top: 1px solid #fff; }
.scale { flex: 1; display: flex; align-items: center; overflow: hidden; }
.scale span { flex: 62 0 0; text-align: center; white-space: nowrap; }
.scale b { flex: 49 0 0; background: linear-gradient(90deg, #fff 44px, transparent 44px); color: #000; font-weight: normal; line-height: 14px; overflow: hidden; white-space: nowrap; }
.corner { width: 45px; display: flex; justify-content: flex-end; align-items: center; }
.corner em { font-style: normal; background: #00c000; padding: 0 3px; line-height: 14px; }
.hscroll { display: flex; align-items: center; height: 19px; background: #f0f0f0; border-left: 1px solid #6c6c70; border-bottom: 1px solid #fff; }
.hscroll svg { width: 16px; height: 17px; }
.hscroll span { width: 18px; height: 17px; margin-left: auto; background: #cdcdcd; }

/* floating windows */
.pop { position: absolute; background: #f0f0f0; border: 1px solid #777; box-shadow: 2px 3px 12px rgba(0, 0, 0, 0.35); }
.pop header { display: flex; align-items: center; background: #fff; color: #8f8f8f; font-family: "Open Sans", "Noto Sans", sans-serif; font-size: 13px; white-space: pre; }
.pop header h2 { flex: 1; font-size: 13px; }
.pop header button { border: 0; background: none; }
.pop header button svg { width: 12px; height: 12px; }
.service { left: 921px; top: 571px; width: 232px; height: 127px; }
.service header { height: 33px; padding: 0 0 4px 7px; gap: 7px; }
.service header button { width: 38px; padding-left: 9px; }
.service nav { height: 18px; padding-left: 6px; display: flex; gap: 14px; background: #fff; font: 12px/14px "Open Sans", sans-serif; }
.service nav a { color: #555; text-decoration: none; }
.log { display: flex; height: 55px; border: 1px solid #777; border-right: 0; border-bottom: 2px solid #aaa; background: #fff; }
.log ul { flex: 1; overflow: hidden; padding: 0 0 0 2px; font-family: "Open Sans", "Noto Sans", sans-serif; font-size: 11px; line-height: 17px; white-space: nowrap; }
.sb { width: 16px; background: #f0f0f0; display: flex; flex-direction: column; justify-content: space-between; }
.sb svg { width: 15px; height: 18px; }
.sb span { flex: 1; background: #cdcdcd; }
.grip { position: absolute; right: 3px; bottom: 3px; width: 10px; height: 10px; }
.replay { left: 570px; top: 679px; width: 558px; height: 228px; font-size: 13px; }
.replay header { height: 30px; padding: 0 5px 0 8px; }
.replay header button { width: 16px; }
.form { padding: 6px 10px 0 8px; }
.two { display: grid; grid-template-columns: 261px 260px; column-gap: 9px; }
.two label { line-height: 20px; }
.two .combo { height: 23px; }
.when { display: flex; justify-content: space-between; align-items: center; margin-top: 4px; padding: 0 8px 0 10px; }
.when label { display: flex; align-items: center; gap: 3px; }
.when .dis { color: #a0a0a0; gap: 7px; text-shadow: 1px 1px #fff; }
.when .dis input { background: #f0f0f0; }
.when .dis input::after { border-color: #888; }
.when input:not([type]) { width: 79px; height: 24px; padding: 0 2px; border: 1px solid; border-color: #777 #fff #fff #777; box-shadow: inset 1px 1px #a0a0a0; background: #f0f0f0; color: #7d7d7d; }
.deck { display: flex; margin-top: 5px; }
fieldset { margin: 0; padding: 0; border: 1px solid #a0a0a0; min-width: 0; }
legend { margin-left: 5px; padding: 0 3px; line-height: 16px; }
.jump { width: 308px; height: 105px; display: flex; padding-left: 7px; gap: 7px; }
.method { width: 175px; }
.method label { display: block; line-height: 18px; margin-bottom: 2px; }
.method select { display: block; width: 175px; height: 63px; padding: 1px 0 0; border: 1px solid; border-color: #777 #fff #fff #777; background: #fff; overflow: hidden; outline: 0; appearance: none; }
.method option { height: 16px; min-height: 16px; padding: 0 2px; line-height: 16px; }
.method option:checked { background: #0078d7 linear-gradient(#0078d7, #0078d7); color: #fff; }
.unit { width: 105px; padding-top: 2px; }
.unit label { display: block; line-height: 19px; padding-left: 3px; }
.unit input { display: block; width: 105px; height: 28px; padding: 0 2px 4px; border: 2px solid; border-color: #777 #fff #fff #777; background: #fff; }
.unit div { display: flex; justify-content: space-between; margin-top: 4px; padding-right: 1px; }
.unit button { width: 30px; height: 28px; }
.mid { width: 149px; margin: 0 9px 0 12px; }
.speed { height: 61px; display: flex; padding: 7px 0 0 7px; }
.speed .combo { width: 102px; height: 23px; }
.spin { width: 16px; height: 24px; display: flex; flex-direction: column; }
.spin button { flex: 1; display: flex; justify-content: center; align-items: center; }
.spin svg { width: 6px; height: 4px; }
.skip { display: flex; align-items: center; gap: 6px; margin: 12px 0 0 2px; line-height: 16px; white-space: nowrap; }
.go { display: flex; flex-direction: column; gap: 17px; padding-top: 11px; }
.go button { width: 60px; height: 29px; }
</style>
